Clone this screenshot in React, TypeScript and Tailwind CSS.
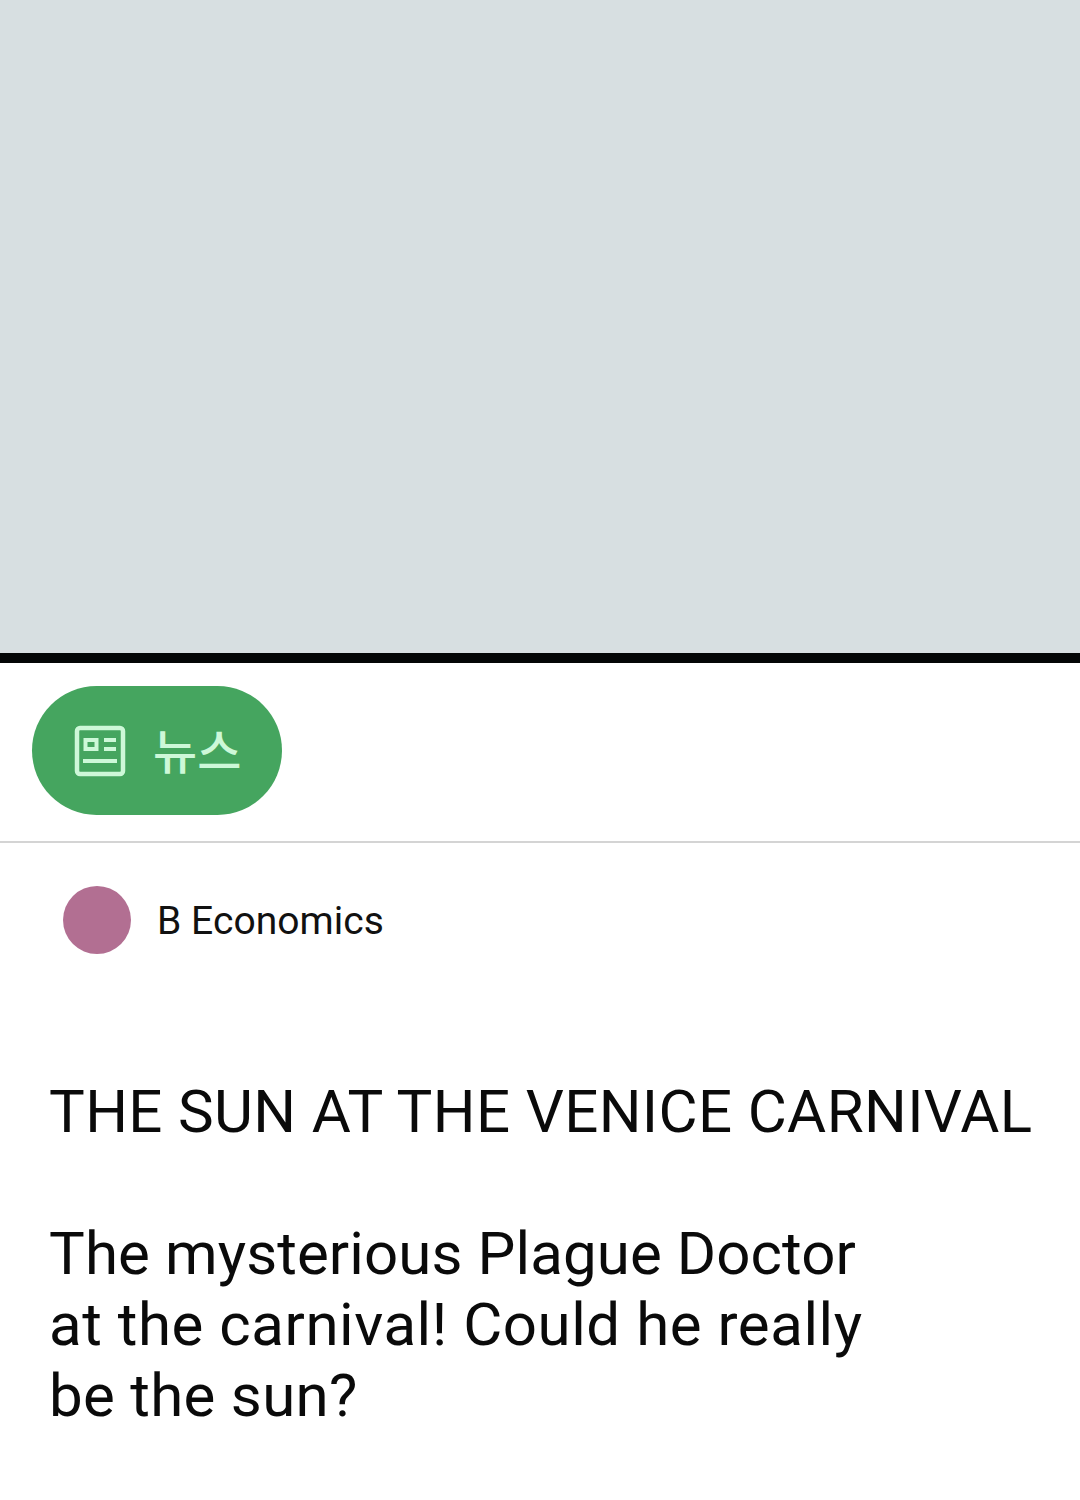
export default function App() {
  return (
    <div className="w-[1080px] h-[1500px] overflow-hidden bg-white flex flex-col font-['Roboto','Noto_Sans_CJK_KR',sans-serif]">
      <div className="h-[653px] shrink-0 bg-[#d7dfe1]" />
      <div className="h-[10px] shrink-0 bg-[#030606]" />
      <div className="h-[180px] shrink-0 border-b-2 border-[#d4d4d4] pt-[23px] pl-[32px]">
        <div className="w-[250px] h-[129px] rounded-full bg-[#45a55f] flex items-center pl-[42px] gap-[27px] text-[#cdf8d8]">
          <svg width="52" height="52" viewBox="0 0 52 52" fill="none" stroke="currentColor" strokeWidth="4.5">
            <rect x="3" y="3" width="46" height="46" rx="3" />
            <rect x="11.5" y="15" width="11" height="9" strokeWidth="4" />
            <path d="M30 15h12M30 24h12M9 36h34" strokeWidth="4" />
          </svg>
          <span className="text-[48px] leading-none font-['Noto_Sans_CJK_KR',sans-serif] font-medium -mt-[5px]">뉴스</span>
        </div>
      </div>
      <div className="flex items-center pl-[63px] pt-[43px] gap-[26px]">
        <div className="w-[68px] h-[68px] rounded-full bg-[#b26f92]" />
        <span className="text-[39px] leading-none text-[#111] font-normal tracking-[0.05px] mt-[3px]">B Economics</span>
      </div>
      <div className="pl-[49px] pt-[122px] text-[60px] leading-[71px] text-[#0a0a0a]">
        <p className="tracking-[0.37px]">THE SUN AT THE VENICE CARNIVAL</p>
        <p className="mt-[71px] tracking-[0.1px]">The mysterious Plague Doctor</p>
        <p className="tracking-[0.55px]">at the carnival! Could he really</p>
        <p className="tracking-[0.3px]">be the sun?</p>
      </div>
    </div>
  );
}
